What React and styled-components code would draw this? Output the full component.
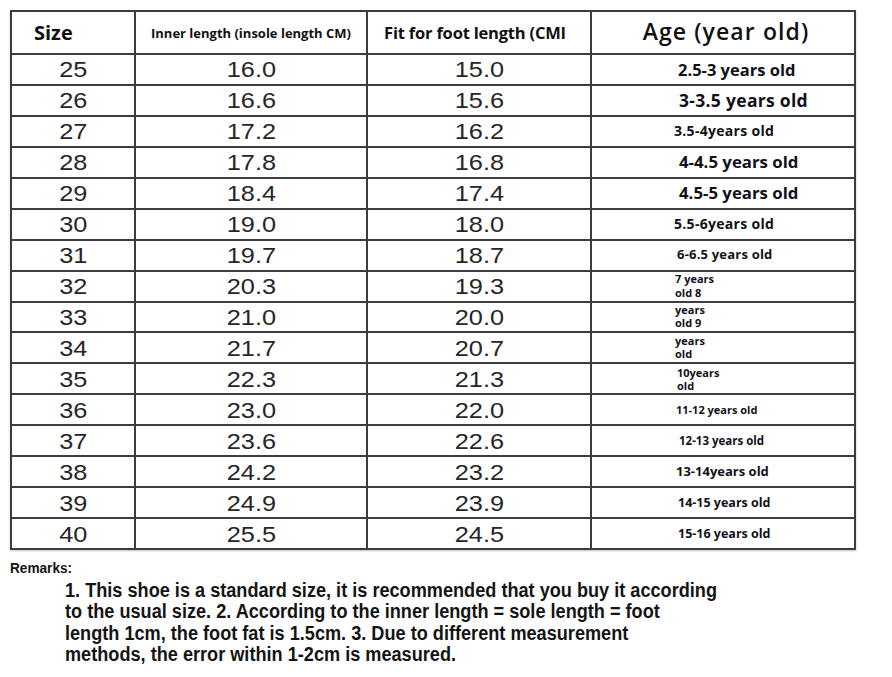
import React from 'react';
import styled, { createGlobalStyle } from 'styled-components';

const GlobalStyle = createGlobalStyle`
  html, body {
    margin: 0;
    padding: 0;
    background: #ffffff;
  }
`;

const Page = styled.div`
  width: 892px;
  height: 677px;
  padding: 10px 0 0 10px;
  box-sizing: border-box;
  background: #fff;
  overflow: hidden;
`;

const Table = styled.div`
  width: 846px;
  height: 540px;
  box-sizing: border-box;
  border: 2px solid #3d3d3d;
  background: #3d3d3d;
  display: grid;
  grid-template-columns: 122px 230px 222px 1fr;
  grid-template-rows: 41px repeat(16, 1fr);
  gap: 2px;
  box-shadow: 0 1px 2px rgba(0, 0, 0, 0.25);
`;

const Cell = styled.div`
  background: #fff;
  display: flex;
  align-items: center;
  justify-content: ${p => (p.$left ? 'flex-start' : 'center')};
  padding-left: ${p => p.$pad || 0}px;
  color: #111;
`;

const HeadText = styled.span`
  font-family: 'Open Sans', 'Noto Sans', sans-serif;
  font-weight: ${p => p.$weight || 700};
  font-size: ${p => p.$size}px;
  letter-spacing: ${p => p.$ls || 0}px;
  color: #111;
  white-space: nowrap;
  margin-top: ${p => p.$dy || 0}px;
  margin-left: ${p => p.$dx || 0}px;
`;

const Num = styled.span`
  display: inline-block;
  font-family: 'Liberation Sans', Arial, sans-serif;
  font-size: 22px;
  color: #262626;
  transform: scaleX(1.15);
  margin-top: 2px;
`;

const AgeText = styled.span`
  font-family: 'Open Sans', 'Noto Sans', sans-serif;
  font-weight: 700;
  font-size: ${p => p.$size}px;
  letter-spacing: ${p => p.$ls || 0}px;
  line-height: ${p => p.$lh || 1.2};
  color: #121018;
  margin-left: ${p => p.$dx || 0}px;
  margin-top: ${p => p.$dy || 0}px;
  white-space: pre;
`;

const Remarks = styled.div`
  font-family: 'Liberation Sans', Arial, sans-serif;
  font-weight: 700;
  color: #141414;
`;

const RemarksLabel = styled.div`
  font-size: 14.5px;
  line-height: 16px;
  margin-top: 10px;
  transform: scaleX(0.94);
  transform-origin: left top;
`;

const RemarksBody = styled.p`
  margin: 4px 0 0 55px;
  font-size: 19.5px;
  line-height: 21.4px;
  white-space: nowrap;
  transform: scaleX(0.93);
  transform-origin: left top;
`;

const rows = [
  { size: 25, inner: '16.0', fit: '15.0', age: '2.5-3 years old', fs: 16.5, dx: 2 },
  { size: 26, inner: '16.6', fit: '15.6', age: '3-3.5 years old', fs: 17.5, dx: 3, ls: 0.3 },
  { size: 27, inner: '17.2', fit: '16.2', age: '3.5-4years old', fs: 14, dx: -2, ls: 0.3 },
  { size: 28, inner: '17.8', fit: '16.8', age: '4-4.5 years old', fs: 16.8, dx: 3 },
  { size: 29, inner: '18.4', fit: '17.4', age: '4.5-5 years old', fs: 16.8, dx: 3 },
  { size: 30, inner: '19.0', fit: '18.0', age: '5.5-6years old', fs: 14, dx: -2, ls: 0.3 },
  { size: 31, inner: '19.7', fit: '18.7', age: '6-6.5 years old', fs: 13, dx: 1, ls: 0.2 },
  { size: 32, inner: '20.3', fit: '19.3', age: '7 years\nold 8', fs: 11, dx: -1, lh: 1.25 },
  { size: 33, inner: '21.0', fit: '20.0', age: 'years\nold 9', fs: 11, dx: -1, lh: 1.2, dy: -1 },
  { size: 34, inner: '21.7', fit: '20.7', age: 'years\nold', fs: 11, dx: -1, lh: 1.2, dy: -1 },
  { size: 35, inner: '22.3', fit: '21.3', age: '10years\nold', fs: 11, dx: 1, lh: 1.2 },
  { size: 36, inner: '23.0', fit: '22.0', age: '11-12 years old', fs: 11, dx: 0 },
  { size: 37, inner: '23.6', fit: '22.6', age: '12-13 years old', fs: 11.5, dx: 3 },
  { size: 38, inner: '24.2', fit: '23.2', age: '13-14years old', fs: 13, dx: 0 },
  { size: 39, inner: '24.9', fit: '23.9', age: '14-15 years old', fs: 12.5, dx: 2 },
  { size: 40, inner: '25.5', fit: '24.5', age: '15-16 years old', fs: 12.5, dx: 2 },
];

export default function App() {
  return (
    <Page>
      <GlobalStyle />
      <Table>
        <Cell $left $pad={22}>
          <HeadText $size={20}>Size</HeadText>
        </Cell>
        <Cell>
          <HeadText $size={13}>Inner length (insole length CM)</HeadText>
        </Cell>
        <Cell>
          <HeadText $size={16.5} $ls={-0.2} $dx={-8}>Fit for foot length (CMI</HeadText>
        </Cell>
        <Cell>
          <HeadText $size={23} $weight={600} $ls={1.1} $dy={-4} $dx={6}>Age (year old)</HeadText>
        </Cell>

        {rows.map(r => (
          <React.Fragment key={r.size}>
            <Cell><Num>{r.size}</Num></Cell>
            <Cell><Num>{r.inner}</Num></Cell>
            <Cell><Num>{r.fit}</Num></Cell>
            <Cell $left $pad={84}>
              <AgeText $size={r.fs} $dx={r.dx} $ls={r.ls} $lh={r.lh} $dy={r.dy}>
                {r.age}
              </AgeText>
            </Cell>
          </React.Fragment>
        ))}
      </Table>

      <Remarks>
        <RemarksLabel>Remarks:</RemarksLabel>
        <RemarksBody>
          1. This shoe is a standard size, it is recommended that you buy it according
          <br />
          to the usual size. 2. According to the inner length = sole length = foot
          <br />
          length 1cm, the foot fat is 1.5cm. 3. Due to different measurement
          <br />
          methods, the error within 1-2cm is measured.
        </RemarksBody>
      </Remarks>
    </Page>
  );
}
